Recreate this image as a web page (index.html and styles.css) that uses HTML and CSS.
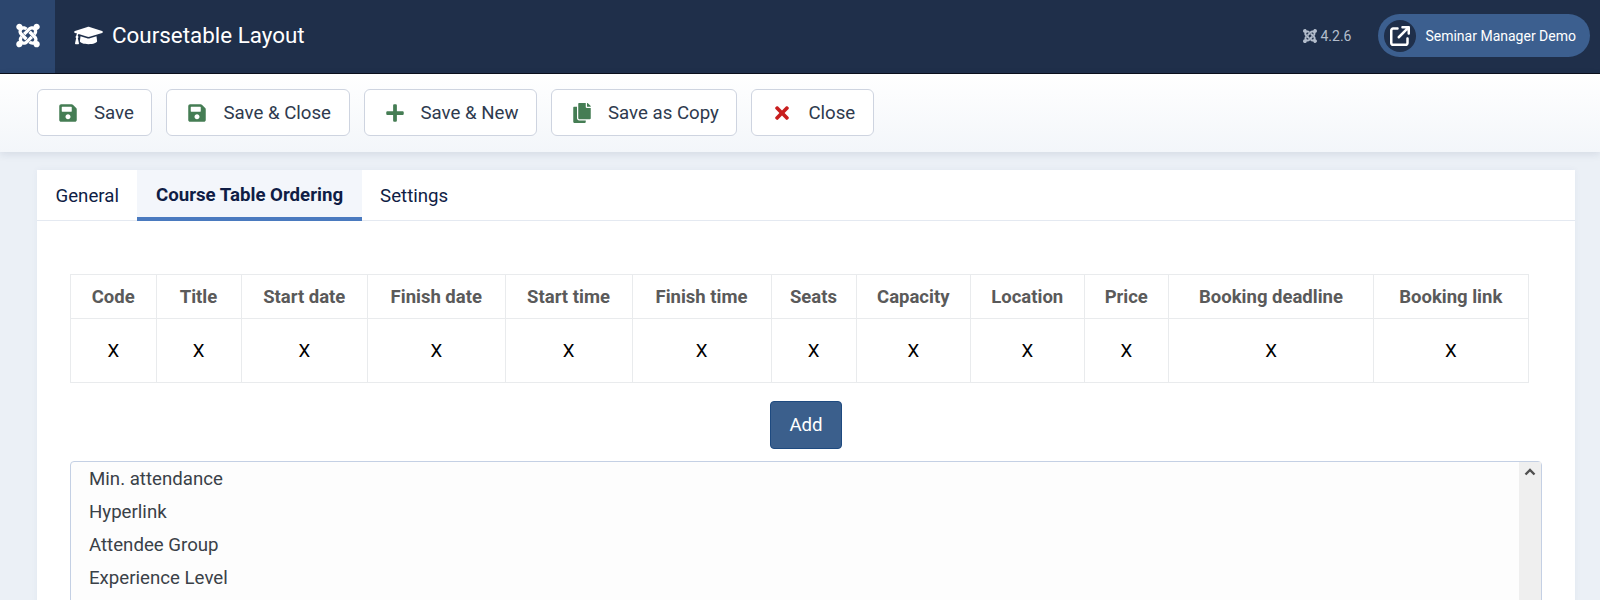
FILE: index.html
```html
<!DOCTYPE html>
<html lang="en">
<head>
<meta charset="utf-8">
<title>Coursetable Layout</title>
<link rel="stylesheet" href="styles.css">
</head>
<body>
<svg class="defs" width="0" height="0" aria-hidden="true">
  <symbol id="i-joomla" viewBox="0 0 448 512">
    <g id="jm-half"><path d="M.6 92.1C.6 58.8 27.4 32 60.4 32c30 0 54.5 21.9 59.2 50.2 32.6-7.6 67.1.6 96.5 30l-44.3 44.3c-20.5-20.5-42.6-16.3-55.4-3.5-14.3 14.3-14.3 37.9 0 52.2l99.5 99.5-44 44.3c-87.7-87.2-49.7-49.7-99.8-99.7-26.8-26.5-35-64.8-24.8-98.9C20.4 144.6.6 120.7.6 92.1zm129.5 116.4l44.3 44.3c10-10 89.7-89.7 99.7-99.8 14.3-14.3 37.6-14.3 51.9 0 12.8 12.8 17 35-3.5 55.4l44 44.3c31.2-31.2 38.5-67.6 28.9-101.2 29.2-4.1 51.9-29.2 51.9-59.5 0-33.2-26.8-60.1-59.8-60.1-30.3 0-55.4 22.5-59.5 51.6-33.8-9.9-71.7-1.5-98.3 25.1-18.3 19.1-71.1 71.5-100.6 100.9z"/></g>
    <use href="#jm-half" transform="rotate(180 224 256)"/>
  </symbol>
  <symbol id="i-cap" viewBox="0 0 640 512"><path d="M622.34 153.2L343.4 67.5c-15.2-4.67-31.6-4.67-46.79 0L17.66 153.2c-23.54 7.23-23.54 38.36 0 45.59l48.63 14.94c-10.67 13.19-17.23 29.28-17.88 46.9C38.78 266.15 32 276.11 32 288c0 10.78 5.68 19.85 13.86 25.65L20.33 428.53C18.11 438.52 25.71 448 35.94 448h56.11c10.24 0 17.84-9.48 15.62-19.47L82.14 313.65C90.32 307.85 96 298.78 96 288c0-11.57-6.47-21.25-15.66-26.87.76-15.02 8.44-28.3 20.69-36.72L296.6 284.5c9.06 2.78 26.44 6.25 46.79 0l278.95-85.7c23.55-7.24 23.55-38.36 0-45.6zM352.79 315.09c-28.53 8.76-52.84 3.92-65.59 0l-145.02-44.55L128 384c0 35.35 85.96 64 192 64s192-28.65 192-64l-14.18-113.47-145.03 44.56z"/></symbol>
  <symbol id="i-link" viewBox="0 0 512 512"><path d="M320 0c-17.7 0-32 14.3-32 32s14.3 32 32 32h82.7L201.4 265.4c-12.5 12.5-12.5 32.8 0 45.3s32.8 12.5 45.3 0L448 109.3V192c0 17.7 14.3 32 32 32s32-14.3 32-32V32c0-17.7-14.3-32-32-32H320zM80 32C35.8 32 0 67.8 0 112V432c0 44.2 35.8 80 80 80H400c44.2 0 80-35.8 80-80V320c0-17.7-14.3-32-32-32s-32 14.3-32 32V432c0 8.8-7.2 16-16 16H80c-8.8 0-16-7.2-16-16V112c0-8.8 7.2-16 16-16H192c17.7 0 32-14.3 32-32s-14.3-32-32-32H80z"/></symbol>
  <symbol id="i-save" viewBox="0 0 448 512"><path d="M433.941 129.941l-83.882-83.882A48 48 0 0 0 316.118 32H48C21.49 32 0 53.49 0 80v352c0 26.51 21.49 48 48 48h352c26.51 0 48-21.49 48-48V163.882a48 48 0 0 0-14.059-33.941zM224 416c-35.346 0-64-28.654-64-64 0-35.346 28.654-64 64-64s64 28.654 64 64c0 35.346-28.654 64-64 64zm96-304.52V212c0 6.627-5.373 12-12 12H76c-6.627 0-12-5.373-12-12V108c0-6.627 5.373-12 12-12h228.52c3.183 0 6.235 1.264 8.485 3.515l3.48 3.48A11.996 11.996 0 0 1 320 111.48z"/></symbol>
  <symbol id="i-plus" viewBox="0 0 448 512"><path d="M416 208H272V64c0-17.67-14.33-32-32-32h-32c-17.67 0-32 14.33-32 32v144H32c-17.67 0-32 14.33-32 32v32c0 17.67 14.33 32 32 32h144v144c0 17.67 14.33 32 32 32h32c17.67 0 32-14.33 32-32V304h144c17.67 0 32-14.33 32-32v-32c0-17.67-14.33-32-32-32z"/></symbol>
  <symbol id="i-copy" viewBox="0 0 448 512"><path d="M320 448v40c0 13.255-10.745 24-24 24H24c-13.255 0-24-10.745-24-24V120c0-13.255 10.745-24 24-24h72v296c0 30.879 25.121 56 56 56h168zm0-344V0H152c-13.255 0-24 10.745-24 24v368c0 13.255 10.745 24 24 24h272c13.255 0 24-10.745 24-24V128H344c-13.2 0-24-10.8-24-24zm120.971-31.029L375.029 7.029A24 24 0 0 0 358.059 0H352v96h96v-6.059a24 24 0 0 0-7.029-16.97z"/></symbol>
  <symbol id="i-times" viewBox="0 0 352 512"><path d="M242.72 256l100.07-100.07c12.28-12.28 12.28-32.19 0-44.48l-22.24-22.24c-12.28-12.28-32.19-12.28-44.48 0L176 189.28 75.93 89.21c-12.28-12.28-32.19-12.28-44.48 0L9.21 111.45c-12.28 12.28-12.28 32.19 0 44.48L109.28 256 9.21 356.07c-12.28 12.28-12.28 32.19 0 44.48l22.24 22.24c12.28 12.28 32.2 12.28 44.48 0L176 322.72l100.07 100.07c12.28 12.28 32.2 12.28 44.48 0l22.24-22.24c12.28-12.28 12.28-32.19 0-44.48L242.72 256z"/></symbol>
</svg>

<header class="topbar">
  <a class="brand"><svg class="brand-icon"><use href="#i-joomla"/></svg></a>
  <h1 class="page-title"><svg class="cap-icon"><use href="#i-cap"/></svg>Coursetable Layout</h1>
  <div class="topbar-right">
    <span class="version"><svg class="version-icon"><use href="#i-joomla"/></svg>4.2.6</span>
    <a class="site-pill"><span class="site-circle"><svg class="link-icon"><use href="#i-link"/></svg></span>Seminar Manager Demo</a>
  </div>
</header>

<nav class="toolbar">
  <button class="tool-btn"><svg class="tool-icon green"><use href="#i-save"/></svg>Save</button>
  <button class="tool-btn"><svg class="tool-icon green"><use href="#i-save"/></svg>Save &amp; Close</button>
  <button class="tool-btn"><svg class="tool-icon green"><use href="#i-plus"/></svg>Save &amp; New</button>
  <button class="tool-btn"><svg class="tool-icon green"><use href="#i-copy"/></svg>Save as Copy</button>
  <button class="tool-btn"><svg class="tool-icon red"><use href="#i-times"/></svg>Close</button>
</nav>

<main class="content">
  <section class="card">
    <div class="tabs">
      <button class="tab">General</button>
      <button class="tab active">Course Table Ordering</button>
      <button class="tab">Settings</button>
    </div>
    <div class="panel">
      <table class="order-table">
        <thead>
          <tr>
            <th class="c-code">Code</th><th class="c-title">Title</th><th class="c-sdate">Start date</th><th class="c-fdate">Finish date</th><th class="c-stime">Start time</th><th class="c-ftime">Finish time</th><th class="c-seats">Seats</th><th class="c-cap">Capacity</th><th class="c-loc">Location</th><th class="c-price">Price</th><th class="c-dead">Booking deadline</th><th class="c-link">Booking link</th>
          </tr>
        </thead>
        <tbody>
          <tr><td>X</td><td>X</td><td>X</td><td>X</td><td>X</td><td>X</td><td>X</td><td>X</td><td>X</td><td>X</td><td>X</td><td>X</td></tr>
        </tbody>
      </table>
      <div class="add-row"><button class="add-btn">Add</button></div>
      <div class="listbox">
        <ul class="list-items">
          <li>Min. attendance</li>
          <li>Hyperlink</li>
          <li>Attendee Group</li>
          <li>Experience Level</li>
        </ul>
        <div class="scrollbar"><svg class="chevron" viewBox="0 0 12 8"><path d="M1.5 6.5 6 2l4.500 4.500" fill="none" stroke="#505050" stroke-width="2.400"/></svg></div>
      </div>
    </div>
  </section>
</main>
</body>
</html>
```
FILE: styles.css
```css
* { box-sizing: border-box; }
html, body { margin: 0; height: 600px; overflow: hidden; }
body { background: #ebf0f6; font-family: Roboto, "Liberation Sans", sans-serif; font-size: 18.67px; color: #22262a; }
.defs { position: absolute; }
svg { fill: currentColor; display: block; }
button { font: inherit; cursor: pointer; }

.topbar { display: flex; align-items: center; height: 74px; background: #1f2f4a; border-bottom: 1px solid #0a0f1a; color: #fff; }
.brand { display: flex; align-items: center; justify-content: center; align-self: stretch; width: 55px; padding-bottom: 2px; background: #2c466e; }
.brand-icon { width: 24px; height: 27px; }
.page-title { display: flex; align-items: center; gap: 9px; margin: 0 0 2px 19px; font-size: 22.4px; font-weight: 400; line-height: 1; }
.cap-icon { width: 29px; height: 23px; }
.topbar-right { display: flex; align-items: center; margin: 0 0 2px auto; padding-right: 10px; }
.version { display: flex; align-items: center; gap: 3px; font-size: 14px; color: #b3bdcc; margin-right: 27px; }
.version-icon { width: 14px; height: 16px; }
.site-pill { display: flex; align-items: center; gap: 9px; height: 43px; padding: 0 14px 0 6px; border-radius: 22px; background: #3c5f8f; font-size: 14px; }
.site-circle { display: flex; align-items: center; justify-content: center; width: 32px; height: 32px; border-radius: 50%; background: #1f2f4a; }
.link-icon { width: 20px; height: 20px; }

.toolbar { display: flex; gap: 14px; height: 78px; padding: 15px 37px 0; background: linear-gradient(#fff, #f3f6fa); box-shadow: 0 2px 8px rgba(40, 60, 100, .12); position: relative; }
.tool-btn { display: flex; align-items: center; height: 47px; padding: 0 17.5px 0 21px; background: #fff; border: 1px solid #ced4e0; border-radius: 6px; color: #2e3a4e; }
.tool-icon { width: 18px; height: 20px; margin-right: 17px; }
.green { color: #457d54; }
.red { color: #c81e1e; }

.content { padding: 18px 25px 0 37px; }
.card { background: #fff; height: 500px; box-shadow: 0 0 6px rgba(60, 90, 140, .06); }
.tabs { display: flex; height: 51px; border-bottom: 1px solid #e4e9f1; }
.tab { height: 51px; padding: 0 18.5px; background: none; border: 0; color: #0f1d45; }
.tab.active { background: #f3f6fb; border-bottom: 4px solid #4a7abf; font-weight: 700; padding-top: 3px; }

.panel { padding: 53px 33px 0; }
.order-table { border-collapse: collapse; }
.order-table th, .order-table td { border: 1px solid #e9ebed; text-align: center; padding: 0; color: #000; font-weight: 400; }
.order-table th { height: 44px; font-size: 18.5px; font-weight: 700; color: #5a5a5a; }
.order-table td { height: 64px; }
.c-code { width: 85.5px; }
.c-title { width: 85px; }
.c-sdate { width: 126.5px; }
.c-fdate { width: 137.5px; }
.c-stime { width: 127px; }
.c-ftime { width: 139px; }
.c-seats { width: 85px; }
.c-cap { width: 114.5px; }
.c-loc { width: 113.5px; }
.c-price { width: 84.5px; }
.c-dead { width: 205px; }
.c-link { width: 154.5px; }

.add-row { display: flex; justify-content: center; width: 1472px; margin-top: 18px; }
.add-btn { width: 72px; height: 48px; background: #3b5f8c; border: 1px solid #1e4a80; border-radius: 4px; color: #fff; }
.listbox { display: flex; width: 1472px; height: 200px; margin-top: 12px; border: 1px solid #c4d0e4; border-radius: 4px 4px 0 0; background: #fdfdfd; }
.list-items { flex: 1; list-style: none; margin: 0; padding: 1px 0 0 18px; color: #3a4148; }
.list-items li { height: 33px; line-height: 33px; }
.scrollbar { width: 22px; background: #efefef; padding: 6px 5px 0; }
.chevron { width: 12px; height: 8px; }
```
